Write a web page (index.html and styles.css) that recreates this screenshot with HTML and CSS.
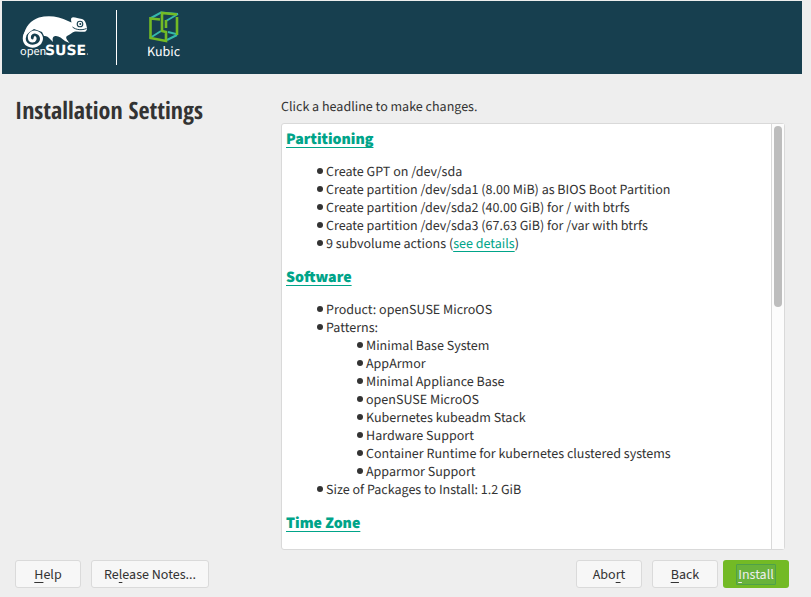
FILE: index.html
```html
<!DOCTYPE html>
<html lang="en">
<head>
<meta charset="utf-8">
<title>Installation Settings</title>
<link rel="stylesheet" href="styles.css">
</head>
<body>
<header class="banner">
  <svg class="brand" viewBox="0 0 72 48" role="img" aria-label="openSUSE">
    <path fill="#fff" d="M3.500 24C5 15 11 8 19 5.500C28 3 39 4 48 9L51.500 10.500C50.500 7 51 5.500 53 5.300C56 5.500 58 6.500 62 7C65 8 66 11 66.500 14C67.500 17 67 18 65.500 19.500C63 20.500 59 19 55 19.500C52 20 50.500 22.500 47 24C45.500 25 46 27 49.500 31L45 29C42 26.500 39 24 36 24C33 24 32 26 33 30L29 26C27 24 25 24 24 24L22 20L14 17Z"/>
    <path fill="none" stroke="#fff" stroke-width="3" d="M8 19C3 23 3 30 8 33C13 36 21 33 21.500 27C21.500 21 15 18.500 11.500 21C8 23.500 9 29 12.500 29C15 29 16 26 14 25"/>
    <circle cx="60" cy="12" r="2.800" fill="#fff" stroke="#173f4f" stroke-width="1.100"/>
    <circle cx="60.300" cy="12" r="1" fill="#173f4f"/>
    <path fill="none" stroke="#173f4f" stroke-width="1" d="M52.500 15C56 18 62 18.500 66.500 16.500"/>
    <text class="brand-open" x="0" y="43">open</text>
    <text class="brand-suse" x="25" y="43">SUSE</text>
    <circle cx="67.500" cy="42" r=".6" fill="#fff"/>
  </svg>
  <span class="divider"></span>
  <div class="product">
    <svg class="cube" viewBox="0 0 32 34" aria-hidden="true">
      <g fill="none" stroke-width="2">
        <path stroke="#35b9ab" d="M2 8.500L13 2.500L30 4M2 28L13 21M18 11L30 4M19 30L29 25M20 22L28 24"/>
        <path stroke="#73ba25" stroke-width="2.600" d="M12 9.500L2.500 8.500V28L18 31V22L14 21V3L29 4.500M18 10V18M29 7V25"/>
      </g>
    </svg>
    <span>Kubic</span>
  </div>
</header>
<main class="content">
  <h1>Installation Settings</h1>
  <section class="proposal">
    <p>Click a headline to make changes.</p>
    <div class="panel">
      <div class="summary">
        <h2><a href="#partitioning">Partitioning</a></h2>
        <ul>
          <li>Create GPT on /dev/sda</li>
          <li>Create partition /dev/sda1 (8.00 MiB) as BIOS Boot Partition</li>
          <li>Create partition /dev/sda2 (40.00 GiB) for / with btrfs</li>
          <li>Create partition /dev/sda3 (67.63 GiB) for /var with btrfs</li>
          <li>9 subvolume actions (<a href="#details">see details</a>)</li>
        </ul>
        <h2><a href="#software">Software</a></h2>
        <ul>
          <li>Product: openSUSE MicroOS</li>
          <li>Patterns:
            <ul>
              <li>Minimal Base System</li>
              <li>AppArmor</li>
              <li>Minimal Appliance Base</li>
              <li>openSUSE MicroOS</li>
              <li>Kubernetes kubeadm Stack</li>
              <li>Hardware Support</li>
              <li>Container Runtime for kubernetes clustered systems</li>
              <li>Apparmor Support</li>
            </ul>
          </li>
          <li>Size of Packages to Install: 1.2 GiB</li>
        </ul>
        <h2><a href="#timezone">Time Zone</a></h2>
      </div>
      <div class="track"><div class="thumb"></div></div>
    </div>
  </section>
</main>
<footer class="actions">
  <button type="button"><span><u>H</u>elp</span></button>
  <button type="button"><span>Re<u>l</u>ease Notes...</span></button>
  <div class="navigation">
    <button type="button"><span>Abo<u>r</u>t</span></button>
    <button type="button"><span><u>B</u>ack</span></button>
    <button type="button" class="primary"><span><u>I</u>nstall</span></button>
  </div>
</footer>
</body>
</html>
```
FILE: styles.css
```css
* { box-sizing: border-box; }

body {
  margin: 0;
  height: 100vh;
  display: flex;
  flex-direction: column;
  background: #eeeeee;
  color: #333333;
  font: 14px/18px "Source Sans Pro", "Source Sans 3", "Noto Sans CJK SC", "Open Sans", sans-serif;
  text-rendering: geometricPrecision;
}

.banner {
  display: flex;
  align-items: flex-start;
  margin: 1px 9px 0 2px;
  padding: 9px 18px;
  background: #173f4f;
  color: #fff;
}

.brand { width: 72px; height: 48px; margin-top: 2px; overflow: visible; }
.brand text { fill: #fff; }
.brand-open { font: 11px "Noto Sans CJK SC", sans-serif; }
.brand-suse { font: bold 14px "DejaVu Sans", sans-serif; }

.divider { width: 1px; height: 55px; margin-left: 24px; background: #fff; }

.product {
  display: flex;
  flex-direction: column;
  align-items: center;
  margin-left: 30px;
}
.product span { line-height: 20px; }
.cube { width: 32px; height: 34px; margin-bottom: -2px; }

.content {
  flex: 1;
  min-height: 0;
  display: grid;
  grid-template-columns: 266px 1fr;
  padding: 21px 26px 0 15px;
}

h1 {
  margin: 0;
  font: bold 24px/32px "Open Sans Condensed", "Liberation Sans Narrow", "Open Sans", sans-serif;
}

.proposal { min-height: 0; display: flex; flex-direction: column; }
.proposal p { margin: 3px 0 7px; }

.panel {
  flex: 1;
  min-height: 0;
  display: flex;
  border: 1px solid #d9d9d9;
  border-radius: 3px;
  background: #fff;
}

.summary { flex: 1; padding: 4px; overflow: hidden; }
.summary a { color: #00a489; text-underline-offset: 3px; text-decoration-skip-ink: none; }

h2 { margin: 0 0 11px; font-size: 16px; font-weight: 900; line-height: 24px; }

.summary ul { list-style: none; margin: 0 0 13px; padding: 0 0 0 40px; }
.summary ul ul { margin: 0; }
.summary li::before {
  content: "";
  display: inline-block;
  width: 6px;
  height: 6px;
  margin: 0 3px 2px -9px;
  border-radius: 50%;
  background: #333333;
}

.track {
  width: 13px;
  padding: 2px;
  border-left: 1px solid #d9d9d9;
  background: #fcfcfc;
}
.thumb { width: 8px; height: 43%; border-radius: 4px; background: #bdbdbd; }

.actions { display: flex; gap: 10px; padding: 10px 22px 9px 15px; }
.navigation { display: flex; gap: 10px; margin-left: auto; }

button {
  min-width: 66px;
  height: 28px;
  padding: 2px 12px 0;
  border: 1px solid #dadada;
  border-radius: 3px;
  background: #f7f7f7;
  color: inherit;
  font: inherit;
}
u { text-underline-offset: 3px; }

.primary {
  margin-left: -5px;
  padding: 0;
  border: 0;
  background: #73ba25;
  color: #eeeeee;
}
.primary span {
  display: inline-block;
  padding: 1px 1px 0;
  border: 1px solid #4fa149;
  border-radius: 1px;
  background: #69b33b;
}
```
